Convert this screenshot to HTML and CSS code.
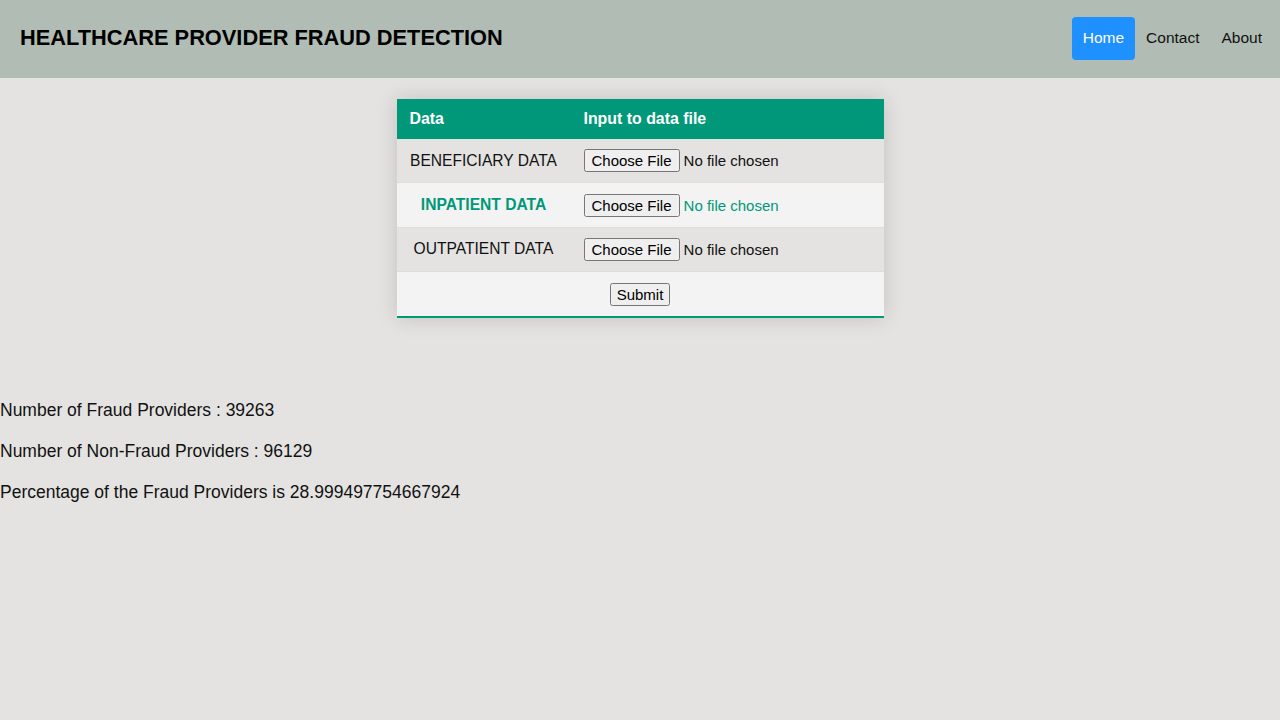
FILE: index.html
```html
<!DOCTYPE html>
<html lang="en">
<head>
<meta charset="utf-8">
<title>Healthcare Provider Fraud Detection</title>
<link rel="stylesheet" href="styles.css">
</head>
<body>
<header class="topbar">
  <h1 class="brand">HEALTHCARE PROVIDER FRAUD DETECTION</h1>
  <nav class="nav">
    <a class="nav-link active" href="#">Home</a>
    <a class="nav-link" href="#">Contact</a>
    <a class="nav-link" href="#">About</a>
  </nav>
</header>
<main class="content">
  <form class="upload-form">
    <table class="styled-table">
      <colgroup><col class="col-data"><col class="col-input"></colgroup>
      <thead>
        <tr><th>Data</th><th>Input to data file</th></tr>
      </thead>
      <tbody>
        <tr><td class="label">BENEFICIARY DATA</td><td><input class="file" type="file"></td></tr>
        <tr class="active-row"><td class="label">INPATIENT DATA</td><td><input class="file" type="file"></td></tr>
        <tr><td class="label">OUTPATIENT DATA</td><td><input class="file" type="file"></td></tr>
        <tr class="submit-row"><td colspan="2" class="submit-cell"><input class="submit" type="submit" value="Submit"></td></tr>
      </tbody>
    </table>
  </form>
  <section class="results">
    <p class="stat">Number of Fraud Providers : 39263</p>
    <p class="stat">Number of Non-Fraud Providers : 96129</p>
    <p class="stat">Percentage of the Fraud Providers is 28.999497754667924</p>
  </section>
</main>
</body>
</html>
```
FILE: styles.css
```css
html, body {
  margin: 0;
  padding: 0;
}
body {
  background: #e4e3e1;
  font-family: "Liberation Sans", Arial, sans-serif;
  color: #111;
}
.topbar {
  height: 78px;
  background: #b1bcb4;
  display: flex;
  align-items: center;
  justify-content: space-between;
  padding: 0 7px 2px 20px;
  box-sizing: border-box;
}
.brand {
  margin: 0;
  font-size: 21.8px;
  font-weight: bold;
  color: #000;
}
.nav {
  display: flex;
  align-items: center;
}
.nav-link {
  font-size: 15.5px;
  color: #111;
  text-decoration: none;
  padding: 12.5px 11px;
  border-radius: 4px;
  line-height: 18px;
}
.nav-link.active {
  background: #1e90ff;
  color: #fff;
}
.content {
  display: flex;
  flex-direction: column;
}
.upload-form {
  display: flex;
  justify-content: center;
  padding-top: 21px;
}
.styled-table {
  border-collapse: collapse;
  table-layout: fixed;
  width: 487px;
  font-size: 15.6px;
  box-shadow: 0 0 20px rgba(0, 0, 0, 0.15);
}
.col-data {
  width: 174px;
}
.styled-table thead tr {
  background: #009879;
  color: #fff;
  text-align: left;
}
.styled-table th {
  padding: 11px 13px;
  font-weight: bold;
  line-height: 18px;
  font-size: 15.9px;
}
.styled-table td {
  padding: 10px 13px;
  line-height: 22px;
  text-align: left;
  white-space: nowrap;
}
.styled-table td.label {
  text-align: center;
  padding-left: 0;
  padding-right: 0;
}
.styled-table tbody tr {
  border-bottom: 1px solid #dddddd;
}
.styled-table tbody tr:nth-of-type(even) {
  background: #f3f3f3;
}
.styled-table tbody tr:last-of-type {
  border-bottom: 2px solid #009879;
}
.styled-table tbody tr.active-row {
  font-weight: bold;
  color: #009879;
}
.file {
  font-family: inherit;
  font-size: 15px;
  color: #111;
  vertical-align: middle;
}
.active-row .file {
  color: #009879;
  font-weight: normal;
}
.submit-cell {
  text-align: center !important;
}
.submit {
  font-family: inherit;
  font-size: 15px;
  padding: 1px 5px;
  vertical-align: middle;
}
.results {
  padding-top: 81px;
}
.stat {
  margin: 0 0 19px 0;
  font-size: 17.5px;
  line-height: 22px;
}
```
